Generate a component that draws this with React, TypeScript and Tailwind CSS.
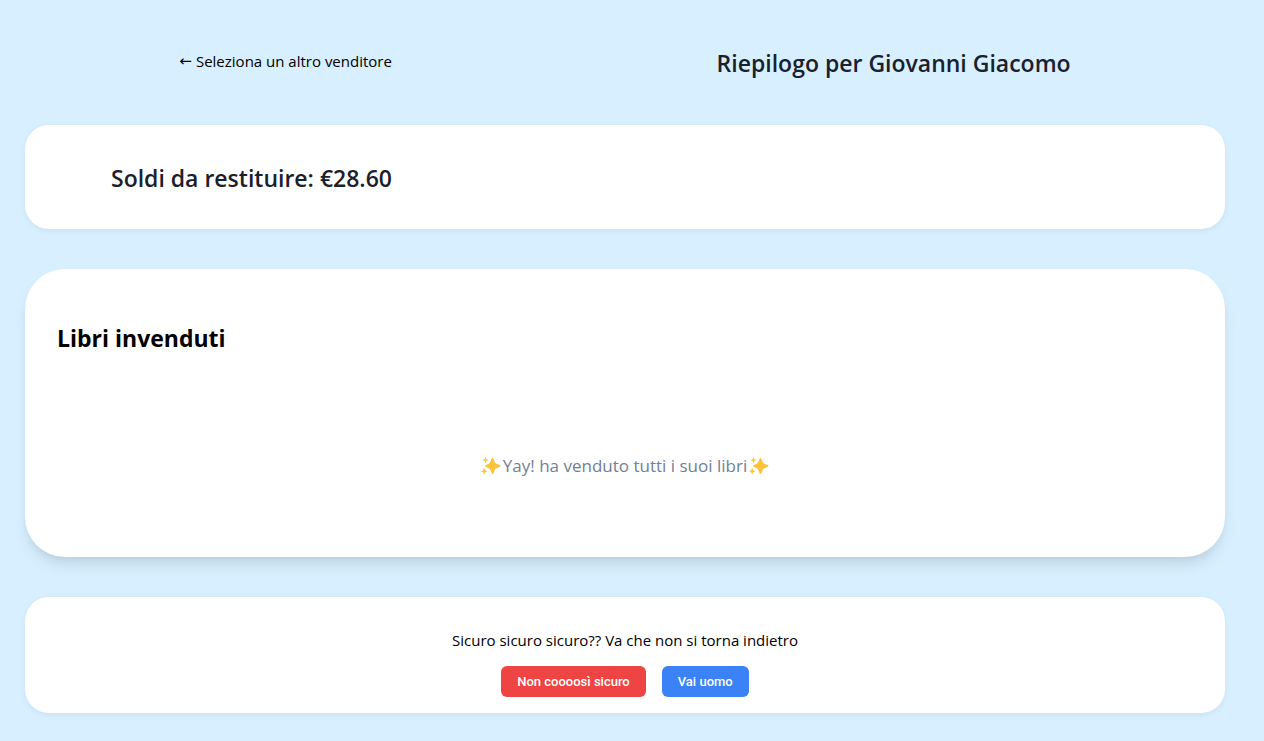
function Sparkles() {
  return (
    <svg viewBox="0 0 20 20" className="size-5 shrink-0" fill="#fdc23c" aria-hidden="true">
      <path d="M11.500 2c.5 0 .8.300 1 .9l1.200 3.200c.3.900.8 1.400 1.700 1.700l3.200 1.200c.6.200.9.500.9 1s-.3.800-.9 1l-3.200 1.200c-.9.300-1.400.8-1.700 1.700l-1.200 3.200c-.2.600-.5.900-1 .9s-.8-.3-1-.9l-1.200-3.200c-.3-.9-.8-1.400-1.700-1.700L5 11c-.6-.2-.9-.5-.9-1S4.400 9.200 5 9l2.600-1.200c.9-.3 1.400-.8 1.700-1.700l1.200-3.200c.2-.6.500-.9 1-.9Z" />
      <path d="M4.500 1 5.400 3.200 7.600 4.100 5.400 5 4.500 7.200 3.600 5 1.400 4.100 3.600 3.200ZM3.200 12 4.200 14.200 6.400 15.200 4.200 16.200 3.200 18.400 2.200 16.200 0 15.200 2.200 14.200Z" />
    </svg>
  );
}

export default function App() {
  return (
    <main className="min-h-screen bg-[#d7efff] pt-10 pr-[39px] pb-7 pl-[25px] font-['Open_Sans','Noto_Sans',sans-serif] text-black">
      <div className="flex flex-col gap-10">
        <header className="flex h-[45px] items-center justify-around gap-4">
          <a href="#venditori" className="flex items-center gap-1 pb-1 text-[15px] leading-6">
            <span className="font-['DejaVu_Sans',sans-serif]">←</span>
            <span>Seleziona un altro venditore</span>
          </a>
          <h1 className="text-[23px] leading-8 font-semibold text-[#1a202c]">Riepilogo per Giovanni Giacomo</h1>
        </header>

        <section className="rounded-3xl bg-white px-[86px] pt-[37px] pb-[35px] shadow-[0_2px_6px_rgba(0,0,0,0.06)]">
          <h2 className="text-[23px] leading-8 font-semibold text-[#1a202c]">Soldi da restituire: €28.60</h2>
        </section>

        <section className="rounded-[40px] bg-white px-8 py-[53px] shadow-[0_10px_15px_-3px_rgba(0,0,0,0.1),0_4px_6px_-2px_rgba(0,0,0,0.05)]">
          <h2 className="text-[23px] leading-8 font-bold">Libri invenduti</h2>
          <p className="flex items-center justify-center gap-0.5 pt-[98px] pb-6 text-[17px] leading-7 text-[#718096]">
            <Sparkles />
            <span>Yay! ha venduto tutti i suoi libri</span>
            <Sparkles />
          </p>
        </section>

        <section className="flex flex-col items-center gap-3.5 rounded-3xl bg-white pt-[31px] pb-4 shadow-[0_2px_6px_rgba(0,0,0,0.06)]">
          <p className="text-[15px] leading-6">Sicuro sicuro sicuro?? Va che non si torna indietro</p>
          <div className="flex gap-4 font-[Roboto,sans-serif] text-[13px] leading-[15px] font-medium text-white">
            <button type="button" className="rounded-md bg-[#ef4444] px-4 py-2">Non coooosì sicuro</button>
            <button type="button" className="rounded-md bg-[#3b82f6] px-4 py-2">Vai uomo</button>
          </div>
        </section>
      </div>
    </main>
  );
}
